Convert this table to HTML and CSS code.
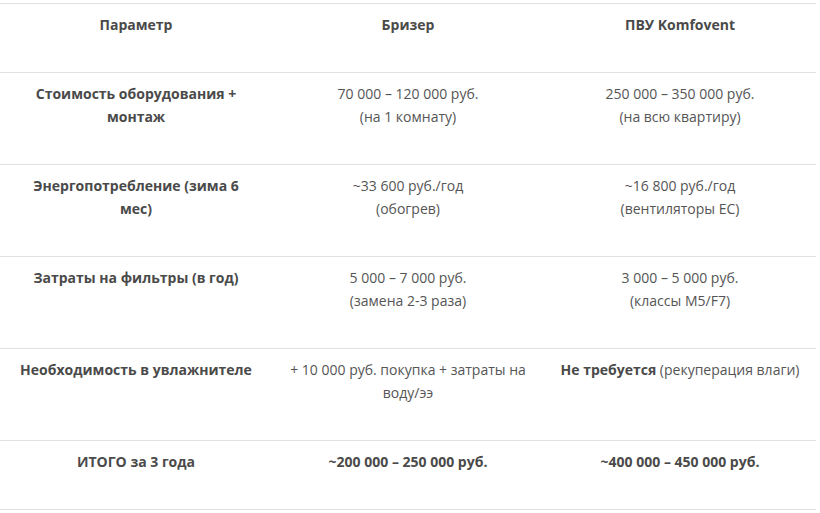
FILE: index.html
```html
<!DOCTYPE html>
<html lang="ru">
<head>
<meta charset="utf-8">
<title>Сравнение затрат</title>
<link rel="stylesheet" href="styles.css">
</head>
<body>
<table class="compare">
  <thead>
    <tr>
      <th>Параметр</th>
      <th>Бризер</th>
      <th>ПВУ Komfovent</th>
    </tr>
  </thead>
  <tbody>
    <tr>
      <td class="param">Стоимость оборудования + монтаж</td>
      <td>70 000 – 120 000 руб.<br>(на 1 комнату)</td>
      <td>250 000 – 350 000 руб.<br>(на всю квартиру)</td>
    </tr>
    <tr>
      <td class="param">Энергопотребление (зима 6 мес)</td>
      <td>~33 600 руб./год<br>(обогрев)</td>
      <td>~16 800 руб./год<br>(вентиляторы EC)</td>
    </tr>
    <tr>
      <td class="param">Затраты на фильтры (в год)</td>
      <td>5 000 – 7 000 руб.<br>(замена 2-3 раза)</td>
      <td>3 000 – 5 000 руб.<br>(классы M5/F7)</td>
    </tr>
    <tr>
      <td class="param">Необходимость в увлажнителе</td>
      <td>+ 10 000 руб. покупка + затраты на воду/ээ</td>
      <td><strong>Не требуется</strong> (рекуперация влаги)</td>
    </tr>
    <tr>
      <td class="param">ИТОГО за 3 года</td>
      <td><strong>~200 000 – 250 000 руб.</strong></td>
      <td><strong>~400 000 – 450 000 руб.</strong></td>
    </tr>
  </tbody>
</table>
</body>
</html>
```

FILE: styles.css
```css
html, body {
  margin: 0;
  padding: 0;
  background: #ffffff;
}

body {
  padding-top: 3px;
  font-family: "Open Sans", "Liberation Sans", sans-serif;
  font-size: 14px;
  line-height: 23px;
  color: #555555;
}

.compare {
  width: 816px;
  border-collapse: collapse;
  table-layout: fixed;
}

.compare th,
.compare td {
  width: 33.333%;
  padding: 9px 16px 36px;
  text-align: center;
  vertical-align: top;
  border-top: 1px solid #e1e1e1;
  border-bottom: 1px solid #e1e1e1;
}

.compare th,
.compare .param,
.compare strong {
  font-weight: 700;
  color: #4a4a4a;
}
```
